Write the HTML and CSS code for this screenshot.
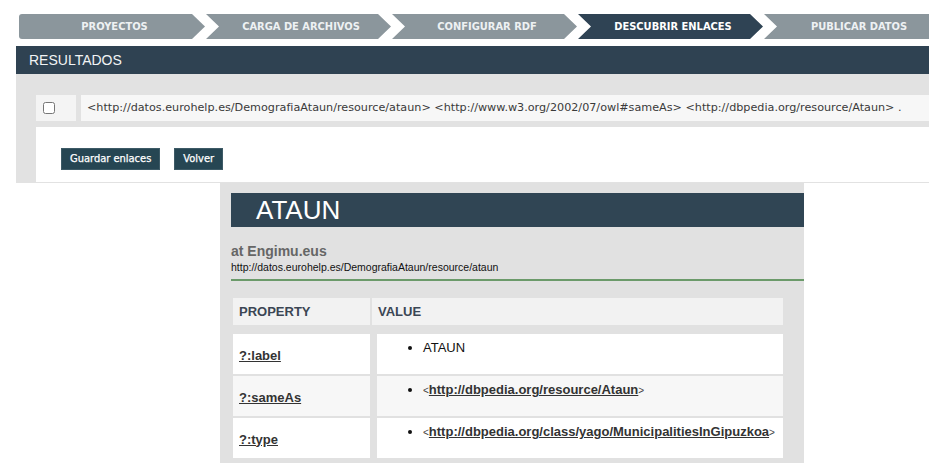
FILE: index.html
```html
<!DOCTYPE html>
<html lang="es">
<head>
<meta charset="utf-8">
<title>Descubrir enlaces</title>
<link rel="stylesheet" href="styles.css">
</head>
<body>
<nav class="wizard">
  <div class="step step-first">PROYECTOS</div>
  <div class="step">CARGA DE ARCHIVOS</div>
  <div class="step">CONFIGURAR RDF</div>
  <div class="step step-active">DESCUBRIR ENLACES</div>
  <div class="step step-last">PUBLICAR DATOS</div>
</nav>

<section class="panel">
  <h2 class="panel-head">RESULTADOS</h2>
  <div class="panel-body">
    <div class="link-row">
      <div class="chk-cell"><input type="checkbox" class="chk"></div>
      <div class="triple">&lt;http://datos.eurohelp.es/DemografiaAtaun/resource/ataun&gt; &lt;http://www.w3.org/2002/07/owl#sameAs&gt; &lt;http://dbpedia.org/resource/Ataun&gt; .</div>
    </div>
    <div class="actions">
      <button class="btn">Guardar enlaces</button>
      <button class="btn">Volver</button>
    </div>
  </div>
</section>

<section class="resource">
  <h1 class="res-title">ATAUN</h1>
  <div class="res-source">at Engimu.eus</div>
  <div class="res-uri">http://datos.eurohelp.es/DemografiaAtaun/resource/ataun</div>
  <div class="res-table">
    <div class="thead">
      <div class="th">PROPERTY</div>
      <div class="th">VALUE</div>
    </div>
    <div class="trow">
      <div class="prop"><a href="#">?:label</a></div>
      <div class="val"><ul><li>ATAUN</li></ul></div>
    </div>
    <div class="trow trow-alt">
      <div class="prop"><a href="#">?:sameAs</a></div>
      <div class="val"><ul><li><span class="ang">&lt;</span><a href="#">http://dbpedia.org/resource/Ataun</a><span class="ang">&gt;</span></li></ul></div>
    </div>
    <div class="trow">
      <div class="prop"><a href="#">?:type</a></div>
      <div class="val"><ul><li><span class="ang">&lt;</span><a href="#">http://dbpedia.org/class/yago/MunicipalitiesInGipuzkoa</a><span class="ang">&gt;</span></li></ul></div>
    </div>
  </div>
</section>
</body>
</html>
```

FILE: styles.css
```css
* { box-sizing: border-box; }

body {
  margin: 0;
  background: #ffffff;
  font-family: "Liberation Sans", Arial, sans-serif;
}

/* ---------- wizard ---------- */
.wizard {
  display: flex;
  gap: 1px;
  margin: 14px 0 0 19px;
  width: 910px;
  height: 25px;
  overflow: hidden;
}

.step {
  flex: none;
  width: 185px;
  height: 25px;
  padding-left: 5px;
  background: #8b969c;
  color: #eef1f3;
  font-family: "DejaVu Sans Condensed", "DejaVu Sans", sans-serif;
  font-stretch: condensed;
  font-weight: bold;
  font-size: 11px;
  line-height: 25px;
  text-align: center;
  clip-path: polygon(0 0, calc(100% - 13px) 0, 100% 50%, calc(100% - 13px) 100%, 0 100%, 13px 50%);
}

.step-first {
  width: 186px;
  border-radius: 3px 0 0 3px;
  clip-path: polygon(0 0, calc(100% - 13px) 0, 100% 50%, calc(100% - 13px) 100%, 0 100%);
}

.step-last {
  clip-path: polygon(0 0, 100% 0, 100% 100%, 0 100%, 13px 50%);
}

.step-active {
  background: #2f4354;
  color: #ffffff;
}

/* ---------- results panel ---------- */
.panel {
  margin: 7px 0 0 16px;
  width: 913px;
}

.panel-head {
  margin: 0;
  height: 28px;
  padding-left: 13px;
  background: #2f4252;
  color: #f2f4f5;
  font-weight: normal;
  font-size: 14px;
  line-height: 28px;
}

.panel-body {
  background: #e2e2e2;
  padding: 21px 0 1px 20px;
}

.link-row {
  display: flex;
  gap: 5px;
  height: 26px;
}

.chk-cell {
  flex: none;
  width: 40px;
  background: #f4f4f4;
  display: flex;
  align-items: center;
  padding-left: 7px;
}

.chk {
  margin: 0;
  width: 12px;
  height: 12px;
}

.triple {
  flex: 1;
  min-width: 0;
  background: #f7f7f7;
  padding-left: 6px;
  color: #3a3a3a;
  font-family: "DejaVu Sans", sans-serif;
  font-size: 11.2px;
  line-height: 26px;
  white-space: nowrap;
  overflow: hidden;
}

.actions {
  margin-top: 6px;
  height: 55px;
  background: #ffffff;
  padding: 21px 0 0 25px;
  display: flex;
  align-items: flex-start;
  gap: 14px;
}

.btn {
  height: 22px;
  padding: 0 8px;
  background: #264653;
  border: 1px solid #3d5a66;
  border-radius: 0;
  color: #ffffff;
  font-family: "DejaVu Sans Condensed", "DejaVu Sans", sans-serif;
  font-stretch: condensed;
  font-weight: normal;
  font-size: 11px;
  line-height: 20px;
  -webkit-text-stroke: 0.25px #ffffff;
}

/* ---------- resource view ---------- */
.resource {
  margin-left: 220px;
  width: 584px;
  background: #e1e1e1;
  padding: 10px 0 5px 11px;
}

.res-title {
  margin: 0;
  height: 34px;
  padding-left: 25px;
  background: #304554;
  color: #ffffff;
  font-weight: normal;
  font-size: 26px;
  line-height: 34px;
}

.res-source {
  margin-top: 16px;
  color: #666666;
  font-weight: bold;
  font-size: 14px;
  line-height: 16px;
}

.res-uri {
  margin-top: 2px;
  color: #111111;
  font-size: 10.5px;
  line-height: 12px;
  padding-bottom: 6px;
  border-bottom: 2px solid #6b9a6a;
}

.res-table {
  margin: 17px 0 0 2px;
}

.thead {
  display: grid;
  grid-template-columns: 137px 411px;
  column-gap: 2px;
  height: 27px;
  margin-bottom: 9px;
}

.th {
  background: #f2f2f2;
  padding-left: 6px;
  color: #3b4654;
  font-weight: bold;
  font-size: 13px;
  line-height: 27px;
}

.trow {
  display: grid;
  grid-template-columns: 137px 406px;
  column-gap: 7px;
  height: 40px;
  margin-bottom: 2px;
}

.trow:last-child { margin-bottom: 0; }

.prop, .val {
  background: #ffffff;
}

.trow-alt .prop, .trow-alt .val {
  background: #f7f7f7;
}

.prop {
  display: flex;
  align-items: center;
  padding: 2px 0 0 6px;
}

.prop a, .val a {
  color: #333333;
  font-weight: bold;
  font-size: 13px;
  text-decoration: underline;
}

.val {
  padding-top: 6px;
  color: #111111;
  font-size: 13px;
  line-height: 15px;
}

.val ul {
  margin: 0;
  padding-left: 46px;
}

.ang {
  color: #444444;
  font-size: 10px;
}
```
